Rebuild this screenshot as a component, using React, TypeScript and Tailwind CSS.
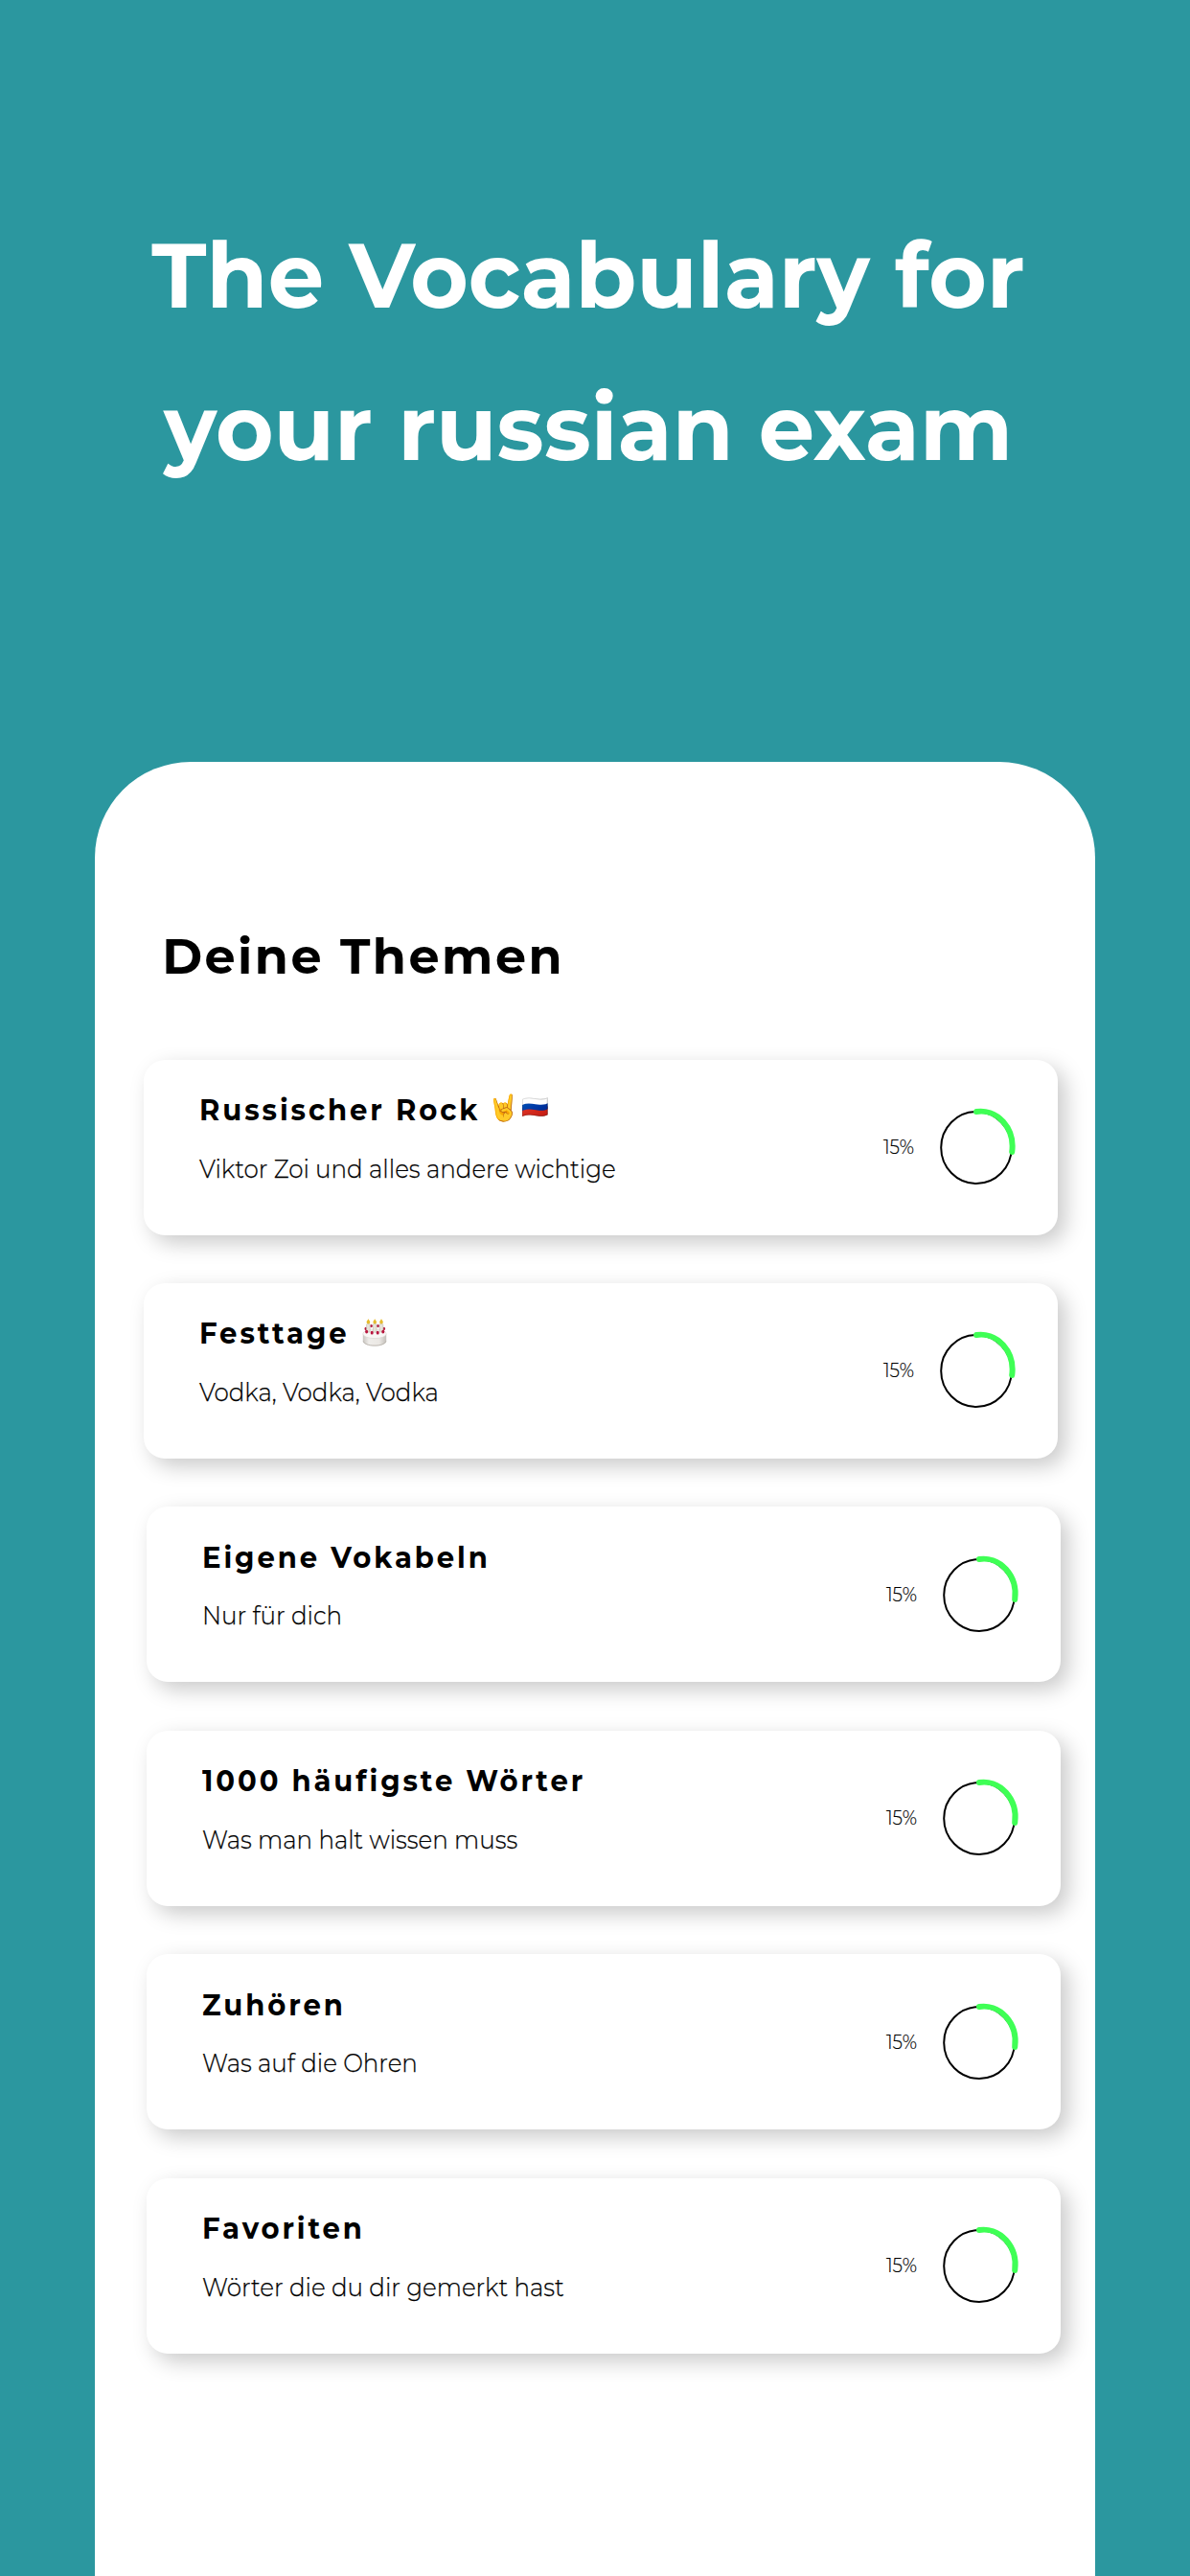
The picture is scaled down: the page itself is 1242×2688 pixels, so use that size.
import type { ReactNode } from 'react';

interface Topic {
  title: string;
  subtitle: string;
  icon?: ReactNode;
  shifted?: boolean;
}

function RockFlag() {
  return (
    <span className="-mt-1.5 ml-1 flex h-10 items-center font-['Noto_Color_Emoji'] tracking-normal">
      <span className="flex w-[24px] justify-center text-[26.5px] leading-10">🤘</span>
      <span className="ml-[6.5px] flex w-[28px] justify-center text-[23px] leading-10">🇷🇺</span>
    </span>
  );
}

function Cake() {
  const candles = [4.6, 11.4, 18.2];
  const backBerries = [9.5, 16.5];
  return (
    <svg className="-mt-1 ml-[8.6px] h-[29px] w-[26px]" viewBox="0 0 26 29">
      <defs>
        <linearGradient id="cakeSide" x1="0" x2="1">
          <stop offset="0" stopColor="#c8c4bf" />
          <stop offset="0.25" stopColor="#efedea" />
          <stop offset="0.7" stopColor="#ebe8e4" />
          <stop offset="1" stopColor="#c2beb9" />
        </linearGradient>
      </defs>
      <path d="M.8 16v7.2c0 3.2 5.3 5.3 12.2 5.3s12.2-2.1 12.2-5.3V16z" fill="url(#cakeSide)" />
      <path d="M1.2 23.5c.8 2.8 5.6 4.6 11.8 4.6s11-1.8 11.8-4.6" fill="none" stroke="#b8b2ac" strokeWidth=".9" />
      <ellipse cx="13" cy="15.8" rx="12.2" ry="4.8" fill="#f8f7f5" stroke="#d2cec9" strokeWidth=".5" />
      {backBerries.map((x) => (
        <ellipse key={x} cx={x} cy="7.6" rx="1.4" ry="1.7" fill="#b51e43" />
      ))}
      <ellipse cx="3.8" cy="10.5" rx="1.3" ry="1.7" fill="#b51e43" />
      <ellipse cx="22.8" cy="10.5" rx="1.3" ry="1.7" fill="#b51e43" />
      {candles.map((x) => (
        <g key={x}>
          <rect x={x} y="5.5" width="3.6" height="8.6" rx=".8" fill="#e8e3d9" stroke="#bfb8ac" strokeWidth=".6" />
          <path d={`M${x + 1.8} .2c1.2 1.7 1.8 2.6 1.8 3.6a1.8 1.8 0 0 1-3.6 0c0-1 .6-1.9 1.8-3.6z`} fill="#e6bb2f" />
        </g>
      ))}
      <ellipse cx="4.6" cy="13.6" rx="1.5" ry="1.9" fill="#b9163f" />
      <ellipse cx="10.2" cy="14.7" rx="1.5" ry="1.9" fill="#b9163f" />
      <ellipse cx="16.2" cy="14.7" rx="1.5" ry="1.9" fill="#b9163f" />
      <ellipse cx="21.8" cy="13.6" rx="1.5" ry="1.9" fill="#b9163f" />
    </svg>
  );
}

const topics: Topic[] = [
  { title: 'Russischer Rock', subtitle: 'Viktor Zoi und alles andere wichtige', icon: <RockFlag /> },
  { title: 'Festtage', subtitle: 'Vodka, Vodka, Vodka', icon: <Cake /> },
  { title: 'Eigene Vokabeln', subtitle: 'Nur für dich', shifted: true },
  { title: '1000 häufigste Wörter', subtitle: 'Was man halt wissen muss', shifted: true },
  { title: 'Zuhören', subtitle: 'Was auf die Ohren', shifted: true },
  { title: 'Favoriten', subtitle: 'Wörter die du dir gemerkt hast', shifted: true },
];

function ProgressRing() {
  return (
    <svg className="ml-[21.6px] size-[90px] shrink-0" viewBox="0 0 90 90" fill="none">
      <ellipse cx="45" cy="45.5" rx="36.8" ry="37.5" stroke="#000" strokeWidth="2" />
      <path d="M45 8A33 36.8 0 0 1 82.2 50" stroke="#3fff55" strokeWidth="6" strokeLinecap="round" />
    </svg>
  );
}

function TopicCard({ title, subtitle, icon, shifted }: Topic) {
  return (
    <article
      className={`flex h-[183px] w-[954.3px] items-center rounded-[22px] bg-white pr-[39.9px] pl-[57.6px] shadow-[8px_8px_22px_rgba(0,0,0,0.21)] ${
        shifted ? 'ml-[54.5px]' : 'ml-[51.5px]'
      }`}
    >
      <div className="flex-1 self-start pt-[33.4px]">
        <div className="flex h-10 items-center">
          <h3 className="origin-left scale-x-[0.97] text-[30px] leading-10 font-bold tracking-[3px] whitespace-nowrap">
            {title}
          </h3>
          {icon}
        </div>
        <p className="mt-[22.6px] origin-left scale-x-[0.957] text-[25.7px] leading-9 font-light whitespace-nowrap [-webkit-text-stroke:0.25px_black]">
          {subtitle}
        </p>
      </div>
      <span className="w-[30.5px] origin-left scale-x-[0.93] text-[20px] leading-7 font-light whitespace-nowrap [-webkit-text-stroke:0.2px_black]">
        15%
      </span>
      <ProgressRing />
    </article>
  );
}

export default function App() {
  return (
    <div className="flex h-[2688px] w-[1242px] flex-col overflow-hidden bg-[#2b979f] font-['Montserrat','Inter',sans-serif] text-black">
      <header className="h-[795px] w-[1228px] shrink-0 pt-[208.3px]">
        <h1 className="origin-center scale-x-[0.9716] text-center text-[95.2px] leading-[158.5px] font-bold text-white">
          The Vocabulary for
          <br />
          your russian exam
        </h1>
      </header>
      <main className="ml-[98.5px] w-[1044.7px] flex-1 rounded-t-[100px] bg-white pt-[170.6px]">
        <h2 className="ml-[70.7px] text-[50.8px] leading-[64px] font-bold tracking-[2.45px]">Deine Themen</h2>
        <section className="mt-[76px] flex flex-col gap-[50.4px]">
          {topics.map((topic) => (
            <TopicCard key={topic.title} {...topic} />
          ))}
        </section>
      </main>
    </div>
  );
}
